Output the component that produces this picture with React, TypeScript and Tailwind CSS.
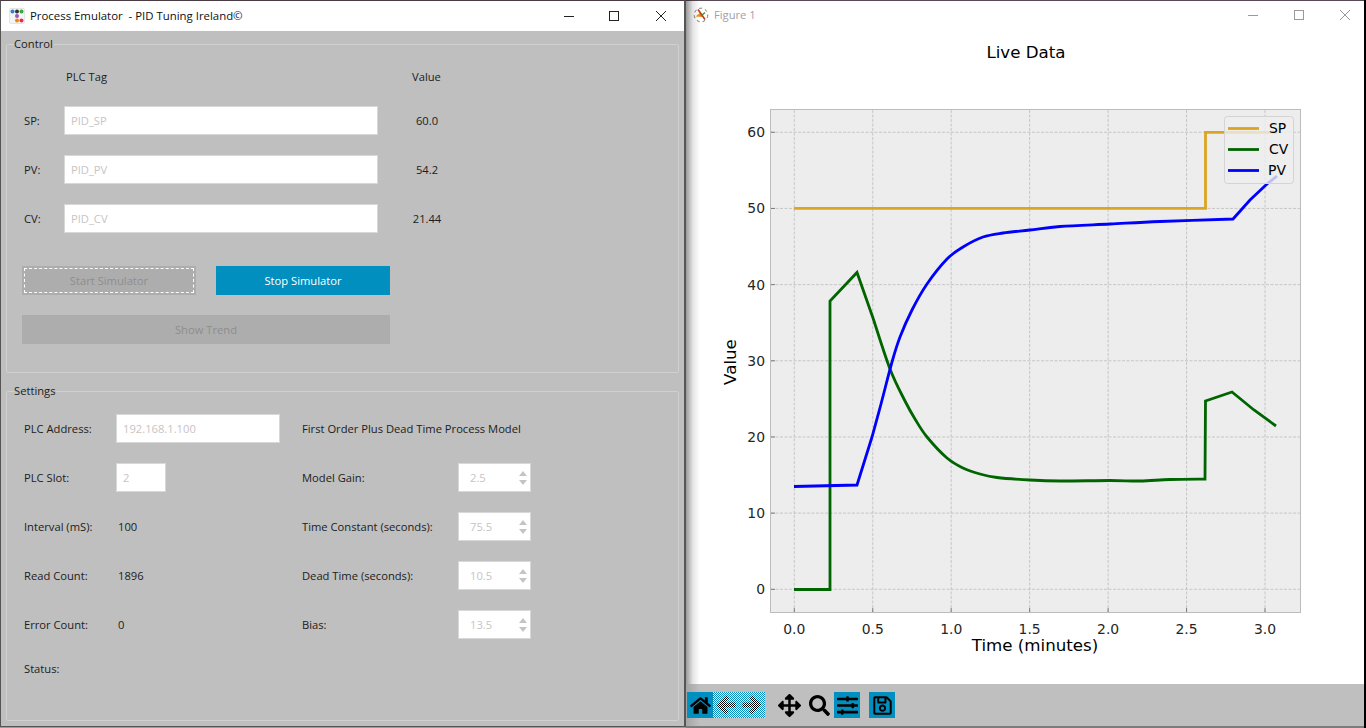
import { FaArrowsAlt, FaHome, FaRegSave, FaSearch, FaSlidersH } from "react-icons/fa";

const tx = (t: number) => 794.3 + 156.9 * t;
const vy = (v: number) => 589.3 - 7.617 * v;

type Pt = [number, number];

// catmull-rom through the points, so the decay curves don't look faceted
const smooth = (pts: Pt[]) => {
  let d = "";
  for (let i = 0; i < pts.length - 1; i++) {
    const p0 = pts[Math.max(i - 1, 0)];
    const p1 = pts[i];
    const p2 = pts[i + 1];
    const p3 = pts[Math.min(i + 2, pts.length - 1)];
    const c1x = p1[0] + (p2[0] - p0[0]) / 6;
    const c1y = p1[1] + (p2[1] - p0[1]) / 6;
    const c2x = p2[0] - (p3[0] - p1[0]) / 6;
    const c2y = p2[1] - (p3[1] - p1[1]) / 6;
    d += ` C${c1x} ${c1y} ${c2x} ${c2y} ${p2[0]} ${p2[1]}`;
  }
  return d;
};

const spLine = "M794 208.3 H1205.5 V132.3 H1277";
const cvLine =
  "M794 589.5 H830 V301 L857 272.5 L873 318" +
  smooth([
    [873, 318], [890, 369], [905, 401], [915, 419], [927, 437], [947, 458], [963, 468],
    [980, 474], [997, 477.5], [1030, 480], [1060, 481], [1110, 480.5], [1140, 481], [1170, 479.5], [1205, 479],
  ]) +
  " L1205.5 401 L1232 392 L1254 410 L1276 426";
const pvLine =
  "M794 486.5 L857 485 L872 437" +
  smooth([
    [872, 437], [881, 404], [892, 362], [900, 337], [912, 310], [927, 284], [947, 259], [963, 247],
    [983, 237], [1003, 233], [1030, 230], [1060, 226.5], [1110, 224], [1160, 221.5], [1233, 219],
  ]) +
  " L1250 200 L1267 184 L1277 176";

const xTicks = [0, 0.5, 1, 1.5, 2, 2.5, 3];
const yTicks = [0, 10, 20, 30, 40, 50, 60];

const GroupBox = ({ title, className, children }: { title: string; className: string; children: React.ReactNode }) => (
  <div className={`relative mx-[5px] rounded-[2px] border border-[#d0d0d0] ${className}`}>
    <span className="absolute -top-[7px] left-[7px] bg-[#bfbfbf] pr-[1px] text-[#1c1c1c]">{title}</span>
    {children}
  </div>
);

const TagRow = ({ label, tag, value }: { label: string; tag: string; value: string }) => (
  <div className="flex h-[29px] items-center">
    <span className="w-[57px] pl-[17px]">{label}</span>
    <div className="flex h-[29px] w-[314px] items-center border border-[#d8d8d8] bg-white pl-[6px] text-[#c8c4c4]">{tag}</div>
    <span className="w-[98px] text-center">{value}</span>
  </div>
);

const Spin = ({ value }: { value: string }) => (
  <div className="ml-auto flex h-[29px] w-[73px] items-center justify-between border border-[#d8d8d8] bg-white pl-[11px] pr-[3px] text-[#c8c4c4]">
    <span>{value}</span>
    <div className="flex flex-col gap-[4px]">
      <svg width="8" height="5" viewBox="0 0 8 5"><path d="M4 0 L8 5 L0 5 Z" fill="#c4c4c4" /></svg>
      <svg width="8" height="5" viewBox="0 0 8 5"><path d="M0 0 L8 0 L4 5 Z" fill="#c4c4c4" /></svg>
    </div>
  </div>
);

const SettingRow = ({ label, children }: { label: string; children?: React.ReactNode }) => (
  <div className="flex h-[29px] items-center">
    <span className="w-[92px] whitespace-nowrap">{label}</span>
    {children}
  </div>
);

const ModelRow = ({ label, value }: { label: string; value: string }) => (
  <div className="flex h-[29px] w-[229px] items-center whitespace-nowrap">
    <span>{label}</span>
    <Spin value={value} />
  </div>
);

const ToolButton = ({ children, dither }: { children: React.ReactNode; dither?: boolean }) => (
  <div className="relative flex h-[26px] w-[26px] items-center justify-center bg-[#008fbf]">
    {children}
    {dither && (
      <svg width="26" height="26" className="absolute inset-0">
        <defs>
          <pattern id="dither" width="2" height="2" patternUnits="userSpaceOnUse">
            <rect x="0" y="0" width="1" height="1" fill="#ffffff" />
            <rect x="1" y="1" width="1" height="1" fill="#ffffff" />
          </pattern>
        </defs>
        <rect width="26" height="26" fill="url(#dither)" />
      </svg>
    )}
  </div>
);

// chunky toolbar arrows, the icon-pack ones come out too thin once dithered
const ArrowLeft = () => (
  <svg width="20" height="20" viewBox="0 0 20 20">
    <path d="M10 0.5 L0.5 10 L10 19.5 L13 16.5 L8.5 12.5 H19.5 V7.5 H8.5 L13 3.5 Z" fill="#000000" />
  </svg>
);

const ArrowRight = () => (
  <svg width="20" height="20" viewBox="0 0 20 20">
    <path d="M10 0.5 L19.5 10 L10 19.5 L7 16.5 L11.5 12.5 H0.5 V7.5 H11.5 L7 3.5 Z" fill="#000000" />
  </svg>
);

const Chart = () => (
  <svg width="678" height="653" viewBox="686 31 678 653" className="block font-['DejaVu_Sans',sans-serif]">
    <rect x="770.5" y="109.5" width="530" height="503" fill="#ededed" stroke="#bcbcbc" />
    <g stroke="#bcbcbc" strokeWidth="0.8" strokeDasharray="3 1.5">
      {xTicks.map((t) => (
        <line key={t} x1={tx(t)} x2={tx(t)} y1="110" y2="612" />
      ))}
      {yTicks.map((v) => (
        <line key={v} x1="771" x2="1300" y1={vy(v)} y2={vy(v)} />
      ))}
    </g>
    <g stroke="#666666" strokeWidth="0.8">
      {xTicks.map((t) => (
        <line key={t} x1={tx(t)} x2={tx(t)} y1="612" y2="608" />
      ))}
      {yTicks.map((v) => (
        <line key={v} x1="771" x2="775" y1={vy(v)} y2={vy(v)} />
      ))}
    </g>
    <g fill="none" strokeWidth="2.8" strokeLinejoin="miter">
      <path d={spLine} stroke="#daa520" />
      <path d={cvLine} stroke="#006400" />
      <path d={pvLine} stroke="#0000ff" />
    </g>
    <rect x="1224.5" y="116.5" width="69" height="67" rx="3" fill="#ededed" fillOpacity="0.8" stroke="#d4d4d4" />
    <line x1="1228" x2="1259" y1="128.5" y2="128.5" stroke="#daa520" strokeWidth="2.8" />
    <line x1="1228" x2="1259" y1="149.5" y2="149.5" stroke="#006400" strokeWidth="2.8" />
    <line x1="1228" x2="1259" y1="170.5" y2="170.5" stroke="#0000ff" strokeWidth="2.8" />
    <g fontSize="13.9" fill="#000000">
      <text x="1269" y="133">SP</text>
      <text x="1269" y="154">CV</text>
      <text x="1268" y="175">PV</text>
    </g>
    <g fontSize="13.9" fill="#262626" textAnchor="middle">
      {xTicks.map((t) => (
        <text key={t} x={tx(t)} y="634">{t.toFixed(1)}</text>
      ))}
    </g>
    <g fontSize="13.9" fill="#262626" textAnchor="end">
      {yTicks.map((v) => (
        <text key={v} x="765" y={vy(v) + 5}>{v}</text>
      ))}
    </g>
    <text x="1026" y="58" fontSize="16.67" textAnchor="middle" fill="#000000">Live Data</text>
    <text x="1035" y="651" fontSize="16.67" textAnchor="middle" fill="#000000">Time (minutes)</text>
    <text x="736" y="362" fontSize="16.67" textAnchor="middle" fill="#000000" transform="rotate(-90 736 362)">Value</text>
  </svg>
);

export default function App() {
  return (
    <div className="flex h-[728px] w-[1366px] overflow-hidden bg-white font-['Open_Sans','Noto_Sans',sans-serif] text-[11.2px] leading-none text-[#1c1c1c]">
      {/* Emulator window */}
      <div className="w-[686px] shrink-0 bg-[#9c9c9c]">
        <div className="flex h-[727px] flex-col border-y border-r-2 border-l border-[#555555] border-t-[#4a3a44]">
          <div className="flex h-[30px] shrink-0 items-center bg-white">
            <svg width="16" height="16" viewBox="0 0 16 16" className="ml-[8px]">
              <rect x="0.5" y="0.5" width="15" height="15" rx="1" fill="#f4f4f4" stroke="#e4e4e4" />
              <circle cx="3.5" cy="3.5" r="2" fill="#2f7fd8" />
              <circle cx="8" cy="3.5" r="2" fill="#333333" />
              <circle cx="12.5" cy="3.5" r="2" fill="#3aa83a" />
              <circle cx="8" cy="8" r="2" fill="#9b59b6" />
              <circle cx="8" cy="12.5" r="2" fill="#f08020" />
              <circle cx="12.5" cy="12.5" r="2" fill="#e8304a" />
            </svg>
            <span className="ml-[5px] whitespace-pre text-[11.4px] text-[#101010]">Process Emulator  - PID Tuning Ireland©</span>
            <div className="ml-auto flex h-full items-center">
              <svg width="46" height="30" viewBox="0 0 46 30"><path d="M18 15.5 H28" stroke="#222222" /></svg>
              <svg width="46" height="30" viewBox="0 0 46 30"><rect x="17.5" y="10.5" width="9" height="9" fill="none" stroke="#222222" /></svg>
              <svg width="46" height="30" viewBox="0 0 46 30"><path d="M18 10 L28 20 M28 10 L18 20" stroke="#222222" /></svg>
            </div>
          </div>
          <div className="flex min-h-0 flex-1 flex-col bg-[#bfbfbf] pt-[13px]">
            <GroupBox title="Control" className="h-[329px] pt-[25px]">
              <div className="flex h-[14px] items-center">
                <span className="ml-[59px] w-[346px]">PLC Tag</span>
                <span>Value</span>
              </div>
              <div className="mt-[22px] flex flex-col gap-[20px]">
                <TagRow label="SP:" tag="PID_SP" value="60.0" />
                <TagRow label="PV:" tag="PID_PV" value="54.2" />
                <TagRow label="CV:" tag="PID_CV" value="21.44" />
              </div>
              <div className="ml-[15px] mt-[33px] flex gap-[20px]">
                <div className="flex h-[29px] w-[174px] items-center justify-center bg-[#adadad] text-[#8e8e8e] outline-1 -outline-offset-3 outline-dashed outline-white">
                  Start Simulator
                </div>
                <div className="flex h-[29px] w-[174px] items-center justify-center bg-[#008fbf] text-white">Stop Simulator</div>
              </div>
              <div className="ml-[15px] mt-[20px] flex h-[29px] w-[368px] items-center justify-center bg-[#adadad] text-[#8e8e8e]">
                Show Trend
              </div>
            </GroupBox>
            <GroupBox title="Settings" className="mb-[5px] mt-[18px] flex-1 pl-[17px] pt-[22px]">
              <div className="flex">
                <div className="flex w-[278px] flex-col gap-[20px]">
                  <SettingRow label="PLC Address:">
                    <div className="flex h-[29px] w-[164px] items-center border border-[#d8d8d8] bg-white pl-[6px] text-[#c8c4c4]">192.168.1.100</div>
                  </SettingRow>
                  <SettingRow label="PLC Slot:">
                    <div className="flex h-[29px] w-[50px] items-center border border-[#d8d8d8] bg-white pl-[6px] text-[#c8c4c4]">2</div>
                  </SettingRow>
                  <SettingRow label="Interval (mS):"><span className="ml-[2px]">100</span></SettingRow>
                  <SettingRow label="Read Count:"><span className="ml-[2px]">1896</span></SettingRow>
                  <SettingRow label="Error Count:"><span className="ml-[2px]">0</span></SettingRow>
                </div>
                <div className="flex flex-col gap-[20px]">
                  <div className="flex h-[29px] items-center whitespace-nowrap">First Order Plus Dead Time Process Model</div>
                  <ModelRow label="Model Gain:" value="2.5" />
                  <ModelRow label="Time Constant (seconds):" value="75.5" />
                  <ModelRow label="Dead Time (seconds):" value="10.5" />
                  <ModelRow label="Bias:" value="13.5" />
                </div>
              </div>
              <div className="mt-[24px]">Status:</div>
            </GroupBox>
          </div>
        </div>
      </div>

      {/* Figure window */}
      <div className="flex min-w-0 flex-1 flex-col border-r-2 border-black">
        <div className="relative shrink-0">
          <div className="flex h-[31px] items-center border-t border-[#5a4a58] bg-white pb-[2px] pl-[7px]">
            <svg width="16" height="16" viewBox="0 0 16 16">
              <circle cx="8" cy="8" r="6.8" fill="none" stroke="#777777" strokeDasharray="3 3" />
              <path d="M2.5 9.5 L8 5 L9 10 Z" fill="#e8941c" />
              <path d="M5 2.5 L12 12.5" stroke="#c83a1a" strokeWidth="1.6" />
              <path d="M8 9 L12 5.5" stroke="#3a8a3a" strokeWidth="1.2" />
            </svg>
            <span className="ml-[5px] text-[#a0a0a8]">Figure 1</span>
            <div className="ml-auto flex h-[30px] items-center">
              <svg width="46" height="30" viewBox="0 0 46 30"><path d="M18 15.5 H28" stroke="#9a9a9a" /></svg>
              <svg width="46" height="30" viewBox="0 0 46 30"><rect x="18.5" y="10.5" width="9" height="9" fill="none" stroke="#9a9a9a" /></svg>
              <svg width="42" height="30" viewBox="0 0 42 30"><path d="M18 10 L28 20 M28 10 L18 20" stroke="#9a9a9a" /></svg>
            </div>
          </div>
          <div className="h-[653px] overflow-hidden">
            <Chart />
          </div>
          <div className="absolute inset-y-0 left-0 w-[14px] bg-linear-to-r from-black/40 via-black/10 to-transparent" />
        </div>
        <div className="flex flex-1 items-start border-b-2 border-[#7c7c7c] bg-[linear-gradient(to_right,#a4a4a4,#bfbfbf_14px)] pl-[1px] pt-[8px]">
          <ToolButton><FaHome size={21} color="#000000" /></ToolButton>
          <ToolButton dither><ArrowLeft /></ToolButton>
          <ToolButton dither><ArrowRight /></ToolButton>
          <div className="ml-[12px] flex h-[26px] w-[24px] items-center justify-center"><FaArrowsAlt size={23} color="#000000" /></div>
          <div className="ml-[7px] flex h-[26px] w-[22px] items-center justify-center"><FaSearch size={21} color="#000000" /></div>
          <div className="ml-[4px]"><ToolButton><FaSlidersH size={21} color="#000000" /></ToolButton></div>
          <div className="ml-[9px]"><ToolButton><FaRegSave size={21} color="#000000" /></ToolButton></div>
        </div>
      </div>
    </div>
  );
}
